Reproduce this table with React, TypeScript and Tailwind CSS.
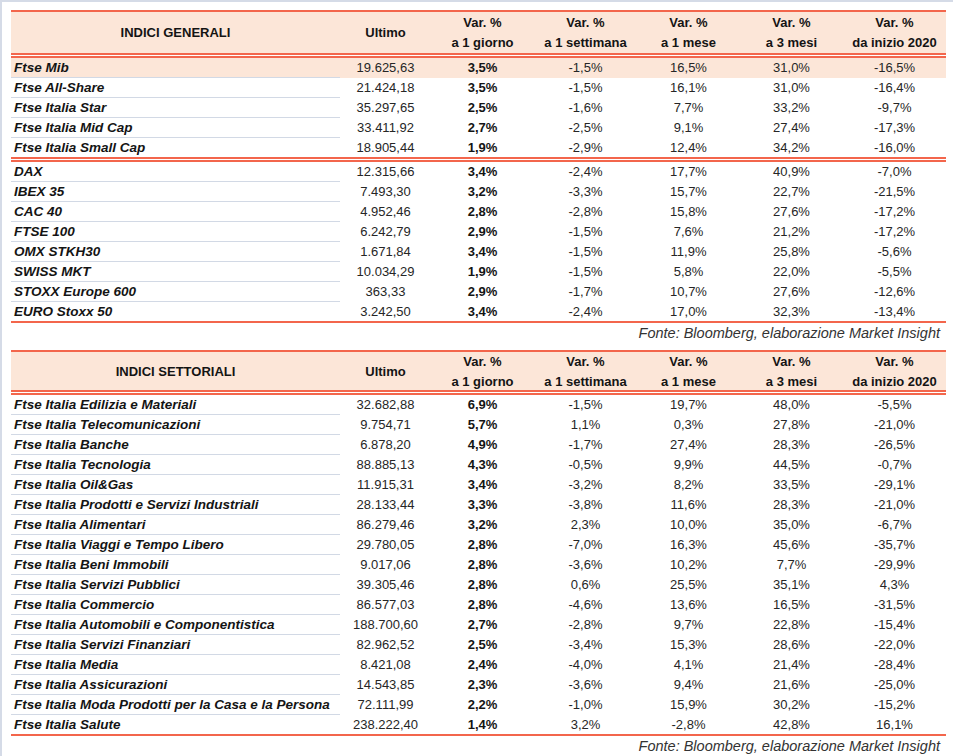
import React from 'react'

type Row = [string, string, string, string, string, string, string]

const generali: Row[][] = [
  [
    ['Ftse Mib', '19.625,63', '3,5%', '-1,5%', '16,5%', '31,0%', '-16,5%'],
    ['Ftse All-Share', '21.424,18', '3,5%', '-1,5%', '16,1%', '31,0%', '-16,4%'],
    ['Ftse Italia Star', '35.297,65', '2,5%', '-1,6%', '7,7%', '33,2%', '-9,7%'],
    ['Ftse Italia Mid Cap', '33.411,92', '2,7%', '-2,5%', '9,1%', '27,4%', '-17,3%'],
    ['Ftse Italia Small Cap', '18.905,44', '1,9%', '-2,9%', '12,4%', '34,2%', '-16,0%'],
  ],
  [
    ['DAX', '12.315,66', '3,4%', '-2,4%', '17,7%', '40,9%', '-7,0%'],
    ['IBEX 35', '7.493,30', '3,2%', '-3,3%', '15,7%', '22,7%', '-21,5%'],
    ['CAC 40', '4.952,46', '2,8%', '-2,8%', '15,8%', '27,6%', '-17,2%'],
    ['FTSE 100', '6.242,79', '2,9%', '-1,5%', '7,6%', '21,2%', '-17,2%'],
    ['OMX STKH30', '1.671,84', '3,4%', '-1,5%', '11,9%', '25,8%', '-5,6%'],
    ['SWISS MKT', '10.034,29', '1,9%', '-1,5%', '5,8%', '22,0%', '-5,5%'],
    ['STOXX Europe 600', '363,33', '2,9%', '-1,7%', '10,7%', '27,6%', '-12,6%'],
    ['EURO Stoxx 50', '3.242,50', '3,4%', '-2,4%', '17,0%', '32,3%', '-13,4%'],
  ],
]

const settoriali: Row[][] = [
  [
    ['Ftse Italia Edilizia e Materiali', '32.682,88', '6,9%', '-1,5%', '19,7%', '48,0%', '-5,5%'],
    ['Ftse Italia Telecomunicazioni', '9.754,71', '5,7%', '1,1%', '0,3%', '27,8%', '-21,0%'],
    ['Ftse Italia Banche', '6.878,20', '4,9%', '-1,7%', '27,4%', '28,3%', '-26,5%'],
    ['Ftse Italia Tecnologia', '88.885,13', '4,3%', '-0,5%', '9,9%', '44,5%', '-0,7%'],
    ['Ftse Italia Oil&Gas', '11.915,31', '3,4%', '-3,2%', '8,2%', '33,5%', '-29,1%'],
    ['Ftse Italia Prodotti e Servizi Industriali', '28.133,44', '3,3%', '-3,8%', '11,6%', '28,3%', '-21,0%'],
    ['Ftse Italia Alimentari', '86.279,46', '3,2%', '2,3%', '10,0%', '35,0%', '-6,7%'],
    ['Ftse Italia Viaggi e Tempo Libero', '29.780,05', '2,8%', '-7,0%', '16,3%', '45,6%', '-35,7%'],
    ['Ftse Italia Beni Immobili', '9.017,06', '2,8%', '-3,6%', '10,2%', '7,7%', '-29,9%'],
    ['Ftse Italia Servizi Pubblici', '39.305,46', '2,8%', '0,6%', '25,5%', '35,1%', '4,3%'],
    ['Ftse Italia Commercio', '86.577,03', '2,8%', '-4,6%', '13,6%', '16,5%', '-31,5%'],
    ['Ftse Italia Automobili e Componentistica', '188.700,60', '2,7%', '-2,8%', '9,7%', '22,8%', '-15,4%'],
    ['Ftse Italia Servizi Finanziari', '82.962,52', '2,5%', '-3,4%', '15,3%', '28,6%', '-22,0%'],
    ['Ftse Italia Media', '8.421,08', '2,4%', '-4,0%', '4,1%', '21,4%', '-28,4%'],
    ['Ftse Italia Assicurazioni', '14.543,85', '2,3%', '-3,6%', '9,4%', '21,6%', '-25,0%'],
    ['Ftse Italia Moda Prodotti per la Casa e la Persona', '72.111,99', '2,2%', '-1,0%', '15,9%', '30,2%', '-15,2%'],
    ['Ftse Italia Salute', '238.222,40', '1,4%', '3,2%', '-2,8%', '42,8%', '16,1%'],
  ],
]

const cols = 'grid grid-cols-[329px_91px_103px_103px_103px_103px_103px]'

const periods = [
  ['Var. %', 'a 1 giorno'],
  ['Var. %', 'a 1 settimana'],
  ['Var. %', 'a 1 mese'],
  ['Var. %', 'a 3 mesi'],
  ['Var. %', 'da inizio 2020'],
]

function DoubleLine() {
  return (
    <div className="flex flex-col">
      <div className="h-[2px] bg-[#f3664c]" />
      <div className="h-[1px] bg-white" />
      <div className="h-[2px] bg-[#f3664c]" />
    </div>
  )
}

function DataRow({ row, last, highlight }: { row: Row; last: boolean; highlight: boolean }) {
  return (
    <div className={`${cols} ${last ? 'h-[19px]' : 'h-[20px]'} ${highlight ? 'bg-[#fce6d8]' : ''}`}>
      <div
        className={`pl-[3px] text-[13.5px] font-bold italic text-[#141414] leading-[19px] whitespace-nowrap ${
          last ? '' : 'border-b border-[#d2d9e5]'
        }`}
      >
        {row[0]}
      </div>
      <div className="text-center leading-[19px] text-[#262626]">{row[1]}</div>
      <div className="text-center leading-[19px] font-bold text-[#141414]">{row[2]}</div>
      <div className="text-center leading-[19px] text-[#262626]">{row[3]}</div>
      <div className="text-center leading-[19px] text-[#262626]">{row[4]}</div>
      <div className="text-center leading-[19px] text-[#262626]">{row[5]}</div>
      <div className="text-center leading-[19px] text-[#262626]">{row[6]}</div>
    </div>
  )
}

function Table({
  title,
  groups,
  headerH,
  highlightFirst,
}: {
  title: string
  groups: Row[][]
  headerH: string
  highlightFirst: boolean
}) {
  return (
    <div>
      <div className="h-[2px] bg-[#f3664c]" />
      <div className={`${cols} ${headerH} bg-[#fce6d8] font-bold text-[#141414]`}>
        <div className="flex items-center justify-center">{title}</div>
        <div className="flex items-center justify-center">Ultimo</div>
        {periods.map((p) => (
          <div key={p[1]} className="flex flex-col items-center justify-center leading-[20px] whitespace-nowrap">
            <span>{p[0]}</span>
            <span>{p[1]}</span>
          </div>
        ))}
      </div>
      {groups.map((g, gi) => (
        <div key={gi}>
          <DoubleLine />
          {g.map((r, i) => (
            <DataRow
              key={r[0]}
              row={r}
              last={i === g.length - 1}
              highlight={highlightFirst && gi === 0 && i === 0}
            />
          ))}
        </div>
      ))}
      <div className="h-[2px] bg-[#f3664c]" />
    </div>
  )
}

function Fonte() {
  return (
    <div className="h-[27px] pr-[6px] text-right italic text-[14.5px] leading-[20px] text-[#333]">
      Fonte: Bloomberg, elaborazione Market Insight
    </div>
  )
}

export default function App() {
  return (
    <div
      className="w-[953px] h-[756px] bg-white border-t-2 border-l-2 border-[#d5dbe7] pl-[9px] pt-[8px] text-[13px] overflow-hidden"
      style={{ fontFamily: '"Liberation Sans", Arial, sans-serif' }}
    >
      <div className="w-[935px]">
        <Table title="INDICI GENERALI" groups={generali} headerH="h-[41px]" highlightFirst />
        <Fonte />
        <Table title="INDICI SETTORIALI" groups={settoriali} headerH="h-[38px]" highlightFirst={false} />
        <Fonte />
      </div>
    </div>
  )
}
